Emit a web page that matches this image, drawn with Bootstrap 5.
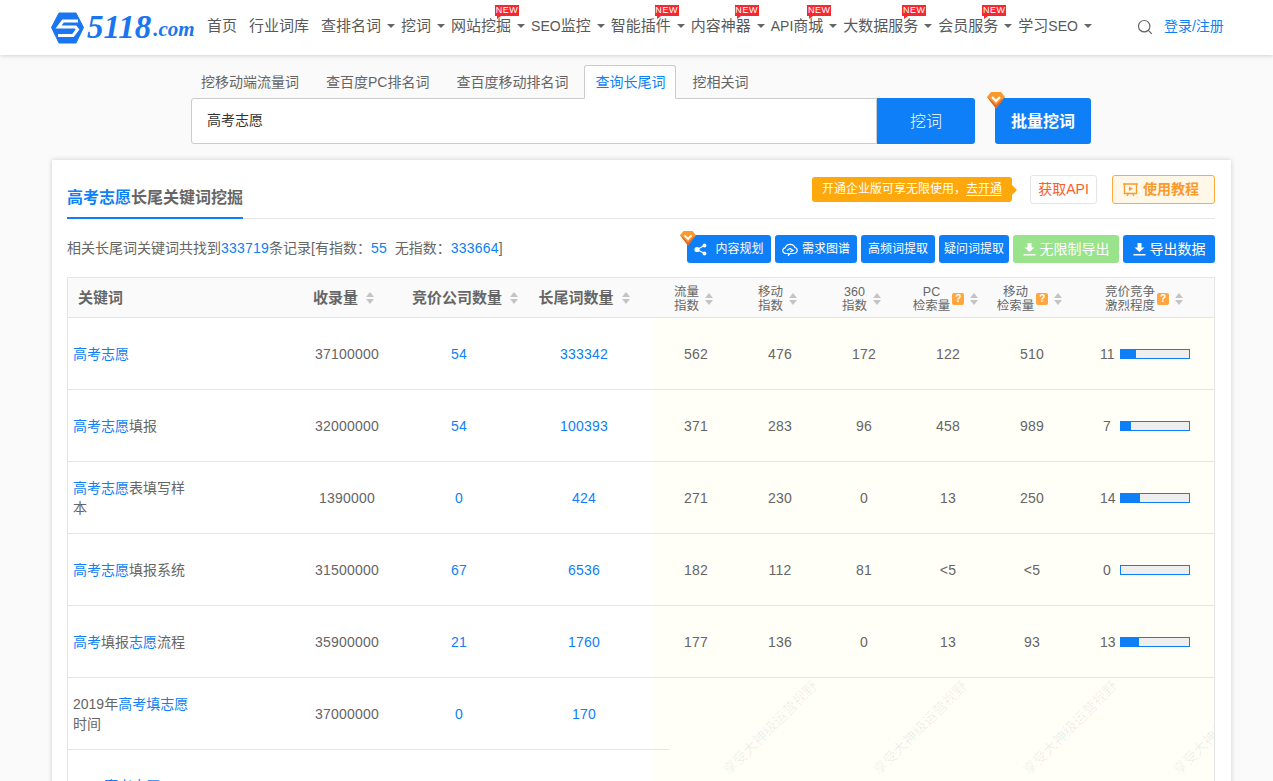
<!DOCTYPE html>
<html lang="zh-CN">
<head>
<meta charset="utf-8">
<title>5118 长尾词挖掘</title>
<link href="https://cdn.jsdelivr.net/npm/bootstrap@5.3.0/dist/css/bootstrap.min.css" rel="stylesheet">
<style>
html,body{height:781px;overflow:hidden}
body{background:#fafafa;color:#666;font-family:"Liberation Sans","Noto Sans CJK SC",sans-serif;font-size:14px}
a{text-decoration:none}
.blue-t{color:#0e7ff7}
.site-head{height:55px;background:#fff;box-shadow:0 1px 4px rgba(0,0,0,.16);padding-left:51px;position:relative;z-index:3}
.logo-wrap{width:156px;flex:none;color:#1976f0;font-family:"Liberation Serif",serif;font-style:italic;font-weight:700;white-space:nowrap;line-height:1}
.logo-num{font-size:33px;margin-left:3px}
.logo-dom{font-size:21px;margin-left:2px;margin-top:3px}
.head-nav{padding-bottom:3px}
.nav-it{position:relative;font-size:15px;color:#595959;white-space:nowrap;line-height:22px}
.lat-s{font-size:14px}
.nav-plain{margin-right:12px}
.nav-drop{padding-right:20px}
.nav-drop::after{content:"";position:absolute;right:6px;top:9px;border:4px solid transparent;border-top:4px solid #666;border-bottom:0}
.new-tag{position:absolute;right:12px;top:-10px;width:24px;height:11px;background:#f5282f;color:#fff;font-size:9px;line-height:11px;text-align:center;letter-spacing:.6px}
.new-tag::after{content:"";position:absolute;left:2px;bottom:-3px;border-left:4px solid #f5282f;border-bottom:3px solid transparent}
.head-search{margin:0 11px 2px 39px}
.login-l{color:#0e7ff7;font-size:14px;padding-bottom:3px}
.search-zone{margin-left:190px;width:901px;padding-top:10px}
.tab-row{border-bottom:0;gap:5px;height:33px;position:relative;z-index:1}
.tab-row .nav-link{height:34px;padding:0 10px;line-height:32px;color:#666;font-size:14px;border:1px solid transparent;border-radius:3px 3px 0 0;margin:0}
.tab-row .nav-link.active{color:#0e7ff7;background:#fff;border-color:#ccc #ccc #fff}
.search-line{padding-left:1px}
.search-box{width:784px;height:46px}
.search-box .form-control{height:46px;border:1px solid #ccc;border-radius:3px 0 0 3px;box-shadow:none;padding:0 15px 5px;font-size:14px;color:#333;font-family:inherit}
.search-go{width:98px;height:46px;background:#0e7ff7;color:#fff;border:0;border-radius:0 3px 3px 0;font-size:16px;font-weight:300;padding:2px 0 0}
.batch-go{position:relative;width:96px;height:46px;margin-left:20px;background:#0e7ff7;color:#fff;border:0;border-radius:3px;font-size:16px;font-weight:700;padding:2px 0 0}
.gem-a{position:absolute;left:-8px;top:-7px;width:18px;height:18px}
.gem-b{position:absolute;left:-7px;top:-5px;width:16px;height:16px}
.main-panel{margin:16px 0 0 52px;width:1179px;background:#fff;box-shadow:0 0 5px rgba(0,0,0,.18);padding:15px 16px 0 15px;height:700px}
.title-row{height:44px;border-bottom:1px solid #e5e5e5}
.title-main{font-size:16px;font-weight:700;height:44px;padding-top:12px;line-height:22px;border-bottom:2px solid #0e7ff7;color:#666}
.tip-box{position:relative;width:200px;height:25px;margin-top:2px;background:#ffa80d;border-radius:3px;color:#fff;font-size:12px;line-height:25px;text-align:center}
.tip-box::after{content:"";position:absolute;right:-5px;top:8px;border-left:5px solid #ffa80d;border-top:5px solid transparent;border-bottom:5px solid transparent}
.tip-box u{text-underline-offset:2px}
.api-btn{width:67px;height:29px;margin-left:18px;background:#fff;border:1px solid #e5e5e5;border-radius:3px;color:#f4602a;font-size:14px;line-height:27px;text-align:center}
.guide-btn{width:103px;height:29px;margin-left:15px;padding-left:10px;background:#fff7e8;border:1px solid #ffa940;border-radius:3px;color:#fa9a2a;font-size:14px;font-weight:700;line-height:27px}
.guide-btn svg{margin-right:5px}
.info-row{height:28px;margin-top:16px;line-height:26px}
.num-t{color:#0e7ff7;letter-spacing:.22px}
.tool-btn{position:relative;height:28px;margin-left:4px;background:#0e7ff7;border-radius:3px;color:#fff;font-size:12px;line-height:28px;white-space:nowrap;display:flex;align-items:center;justify-content:center}
.w-a{width:84px}.w-b{width:82px}.w-c{width:74px}.w-d{width:70px}.w-e{width:106px;background:#98e38b;font-size:14px}.w-f{width:92px;font-size:14px}
.grid-wrap{position:relative;margin-top:14px;height:560px;overflow:hidden;border:1px solid #e5e5e5;border-bottom:0}
.kw-table{table-layout:fixed;width:1146px;margin:0;--bs-table-bg:transparent;--bs-table-color:#666;--bs-table-border-color:#e5e5e5;color:#666}
.kw-table>:not(caption)>*>*{padding:0;vertical-align:middle;text-align:center;box-shadow:none;border-bottom:1px solid #e5e5e5}
.kw-table>thead>tr>th{height:39px;padding-top:2px;background:#fafafa;font-size:15px;font-weight:700;color:#666;white-space:nowrap}
.kw-table>thead>tr>th.small-h{font-size:12.5px;font-weight:400;line-height:14px;padding-top:3px}
.kw-table>thead>tr>th:not(.small-h) .sort-ar{margin-left:8px}
.kw-table>thead>tr>th.small-h:not(:last-child) .hd-in{margin-left:-5px}
.kw-table>tbody>tr>td{height:72px;font-size:14px;padding-top:2px;letter-spacing:.22px}
.kw-table>tbody>tr>td.kw-cell{text-align:left;padding-left:5px;line-height:20px;letter-spacing:0}
.kw-table>tbody>tr>td.tint{background:#fffef7}
.kw-txt{display:block;width:120px}
.c1{width:222px}.c2{width:114px}.c3{width:110px}.c4{width:140px}.c5,.c6,.c7,.c8,.c9{width:84px}.c10{width:140px}
.hd-in{display:inline-flex;align-items:center;justify-content:center}
.hd-left{display:flex;justify-content:flex-start;padding-left:10px}
.shift-r{margin-left:8px}
.shift-l{margin-left:-3px}
.sort-ar{display:inline-flex;flex-direction:column;gap:2px;margin-left:6px}
.sort-ar i{display:block;border-left:4.5px solid transparent;border-right:4.5px solid transparent}
.sort-ar i:first-child{border-bottom:5px solid #c4c4c4}
.sort-ar i:last-child{border-top:5px solid #c4c4c4}
.qm{display:inline-block;width:12px;height:12px;background:#ffa640;border-radius:2px;color:#fff;font-size:10px;font-weight:700;line-height:12px;text-align:center;margin-left:2px}
.bar-cell{display:flex;align-items:center;padding-left:26px}
.bar-num{width:14px;text-align:center;margin-right:6px;letter-spacing:0}
.bar-out{width:70px;height:10px;border:1px solid #0e7ff7;background:#eee}
.bar-in{height:100%;background:#0e7ff7}
.water{position:absolute;left:586px;top:400px;right:0;bottom:0;background:#fffef7;display:flex;padding-top:40px;overflow:hidden}
.water::before{content:"";position:absolute;left:0;top:71px;width:15px;height:1px;background:#e5e5e5}
.water span{flex:none;width:150px;height:20px;text-align:center;line-height:20px;font-size:14px;color:rgba(0,0,0,.07);transform:rotate(-45deg);white-space:nowrap}
.water span:first-child{margin-left:41px}
</style>
</head>
<body>
<header class="site-head d-flex align-items-center">
  <a class="logo-wrap d-flex align-items-center" href="#">
    <svg width="33" height="32" viewBox="0 0 33 32" aria-hidden="true"><path d="M8 1H25L32.500 15.500 25 31H8L.5 15.500Z" fill="#1976f0" stroke="#1976f0" stroke-linejoin="round"/><path d="M27 9H12L7.500 15H24.500L26.500 17.500 22 23.500H7" fill="none" stroke="#fff" stroke-width="3"/></svg>
    <span class="logo-num">5118</span><span class="logo-dom">.com</span>
  </a>
  <nav class="head-nav d-flex align-items-center">
    <a class="nav-it nav-plain" href="#">首页</a>
    <a class="nav-it nav-plain" href="#">行业词库</a>
    <a class="nav-it nav-drop" href="#">查排名词</a>
    <a class="nav-it nav-drop" href="#">挖词</a>
    <a class="nav-it nav-drop" href="#">网站挖掘<span class="new-tag">NEW</span></a>
    <a class="nav-it nav-drop" href="#"><span class="lat-s">SEO</span>监控</a>
    <a class="nav-it nav-drop" href="#">智能插件<span class="new-tag">NEW</span></a>
    <a class="nav-it nav-drop" href="#">内容神器<span class="new-tag">NEW</span></a>
    <a class="nav-it nav-drop" href="#"><span class="lat-s">API</span>商城<span class="new-tag">NEW</span></a>
    <a class="nav-it nav-drop" href="#">大数据服务<span class="new-tag">NEW</span></a>
    <a class="nav-it nav-drop" href="#">会员服务<span class="new-tag">NEW</span></a>
    <a class="nav-it nav-drop" href="#">学习<span class="lat-s">SEO</span></a>
  </nav>
  <svg class="head-search" width="16" height="16" viewBox="0 0 16 16" aria-hidden="true"><circle cx="7.200" cy="7.200" r="5.700" fill="none" stroke="#666" stroke-width="1.200"/><path d="M11.300 11.300 14.800 14.800" stroke="#666" stroke-width="1.200"/></svg>
  <a class="login-l" href="#">登录/注册</a>
</header>

<section class="search-zone">
  <div class="nav nav-tabs tab-row">
    <a class="nav-link" href="#">挖移动端流量词</a>
    <a class="nav-link" href="#">查百度PC排名词</a>
    <a class="nav-link" href="#">查百度移动排名词</a>
    <a class="nav-link active" href="#">查询长尾词</a>
    <a class="nav-link" href="#">挖相关词</a>
  </div>
  <div class="search-line d-flex">
    <div class="search-box d-flex">
      <input class="form-control" type="text" value="高考志愿">
      <button class="search-go flex-shrink-0" type="button">挖词</button>
    </div>
    <button class="batch-go" type="button">
      <svg class="gem-a" viewBox="0 0 18 18" aria-hidden="true"><path d="M4 1H14L18 6 9 17.500 0 6Z" fill="#f99a2e"/><path d="M0 6 9 17.500 18 6 14 9 9 14 4 9Z" fill="#e2642a"/><path d="M5 6 9 10 13 6" fill="none" stroke="#fff" stroke-width="2"/></svg>
      批量挖词
    </button>
  </div>
</section>

<main class="main-panel">
  <div class="title-row d-flex justify-content-between">
    <div class="title-main"><span class="blue-t">高考志愿</span>长尾关键词挖掘</div>
    <div class="d-flex align-items-start">
      <div class="tip-box">开通企业版可享无限使用，<u>去开通</u></div>
      <a class="api-btn" href="#">获取API</a>
      <a class="guide-btn d-flex align-items-center" href="#">
        <svg width="15" height="15" viewBox="0 0 15 15" aria-hidden="true"><path d="M1.500 2H13.500V11.500H1.500ZM0 2H15M4 14 5.500 11.500M11 14 9.500 11.500" fill="none" stroke="#fa9a2a" stroke-width="1.300"/><path d="M6 4.500 10 6.800 6 9Z" fill="#fa9a2a"/></svg>
        使用教程
      </a>
    </div>
  </div>
  <div class="info-row d-flex justify-content-between">
    <div>相关长尾词关键词共找到<span class="num-t">333719</span>条记录[有指数：<span class="num-t">55</span>&nbsp; 无指数：<span class="num-t">333664</span>]</div>
    <div class="d-flex">
      <a class="tool-btn w-a" href="#">
        <svg class="gem-b" viewBox="0 0 18 18" aria-hidden="true"><path d="M4 1H14L18 6 9 17.500 0 6Z" fill="#f99a2e"/><path d="M0 6 9 17.500 18 6 14 9 9 14 4 9Z" fill="#e2642a"/><path d="M5 6 9 10 13 6" fill="none" stroke="#fff" stroke-width="2"/></svg>
        <svg class="me-2" width="13" height="13" viewBox="0 0 13 13" aria-hidden="true"><path d="M3 6.500 10.500 2.500M3 6.500 10.500 10.500" stroke="#fff" stroke-width="1.200"/><circle cx="3" cy="6.500" r="2.600" fill="#fff"/><circle cx="10.500" cy="2.500" r="1.900" fill="#fff"/><circle cx="10.500" cy="10.500" r="1.900" fill="#fff"/></svg>内容规划
      </a>
      <a class="tool-btn w-b" href="#">
        <svg class="me-1" width="16" height="13" viewBox="0 0 16 13" aria-hidden="true"><path d="M4 10.500C1.500 10.500.7 8.800.8 7.300 1 5.500 2.300 4.800 3.200 4.800 3.800 2.600 5.500 1.300 8 1.300 10.500 1.300 12.300 2.500 12.900 4.500 14.500 4.900 15.300 6 15.200 7.300 15 9.300 13.500 10.500 11.500 10.500H8L6.500 12.300V10.500ZM5 7.500 8 5.500 11 7.500 8 9" fill="none" stroke="#fff" stroke-width="1.200"/></svg>需求图谱
      </a>
      <a class="tool-btn w-c" href="#">高频词提取</a>
      <a class="tool-btn w-d" href="#">疑问词提取</a>
      <a class="tool-btn w-e" href="#">
        <svg class="me-1" width="13" height="14" viewBox="0 0 13 14" aria-hidden="true"><path d="M4.500 1H8.500V5.500H11.500L6.500 10 1.500 5.500H4.500ZM.5 12H12.500V13.500H.5Z" fill="#fff"/></svg>无限制导出
      </a>
      <a class="tool-btn w-f" href="#">
        <svg class="me-1" width="13" height="14" viewBox="0 0 13 14" aria-hidden="true"><path d="M4.500 1H8.500V5.500H11.500L6.500 10 1.500 5.500H4.500ZM.5 12H12.500V13.500H.5Z" fill="#fff"/></svg>导出数据
      </a>
    </div>
  </div>

  <div class="grid-wrap">
    <table class="table kw-table">
      <colgroup><col class="c1"><col class="c2"><col class="c3"><col class="c4"><col class="c5"><col class="c6"><col class="c7"><col class="c8"><col class="c9"><col class="c10"></colgroup>
      <thead>
        <tr>
          <th><span class="hd-left">关键词</span></th>
          <th><span class="hd-in shift-l me-1">收录量<span class="sort-ar"><i></i><i></i></span></span></th>
          <th><span class="hd-in shift-r me-1">竞价公司数量<span class="sort-ar"><i></i><i></i></span></span></th>
          <th><span class="hd-in">长尾词数量<span class="sort-ar"><i></i><i></i></span></span></th>
          <th class="small-h"><span class="hd-in"><span>流量<br>指数</span><span class="sort-ar"><i></i><i></i></span></span></th>
          <th class="small-h"><span class="hd-in"><span>移动<br>指数</span><span class="sort-ar"><i></i><i></i></span></span></th>
          <th class="small-h"><span class="hd-in"><span>360<br>指数</span><span class="sort-ar"><i></i><i></i></span></span></th>
          <th class="small-h"><span class="hd-in"><span>PC<br>检索量</span><span class="qm">?</span><span class="sort-ar"><i></i><i></i></span></span></th>
          <th class="small-h"><span class="hd-in"><span>移动<br>检索量</span><span class="qm">?</span><span class="sort-ar"><i></i><i></i></span></span></th>
          <th class="small-h"><span class="hd-in"><span>竞价竞争<br>激烈程度</span><span class="qm">?</span><span class="sort-ar"><i></i><i></i></span></span></th>
        </tr>
      </thead>
      <tbody>
        <tr>
          <td class="kw-cell"><span class="kw-txt"><a class="blue-t" href="#">高考志愿</a></span></td><td>37100000</td><td class="blue-t">54</td><td class="blue-t">333342</td>
          <td class="tint">562</td><td class="tint">476</td><td class="tint">172</td><td class="tint">122</td><td class="tint">510</td>
          <td class="tint"><div class="bar-cell"><span class="bar-num">11</span><div class="bar-out"><div class="bar-in" style="width:22%"></div></div></div></td>
        </tr>
        <tr>
          <td class="kw-cell"><span class="kw-txt"><a class="blue-t" href="#">高考志愿</a>填报</span></td><td>32000000</td><td class="blue-t">54</td><td class="blue-t">100393</td>
          <td class="tint">371</td><td class="tint">283</td><td class="tint">96</td><td class="tint">458</td><td class="tint">989</td>
          <td class="tint"><div class="bar-cell"><span class="bar-num">7</span><div class="bar-out"><div class="bar-in" style="width:14%"></div></div></div></td>
        </tr>
        <tr>
          <td class="kw-cell"><span class="kw-txt"><a class="blue-t" href="#">高考志愿</a>表填写样本</span></td><td>1390000</td><td class="blue-t">0</td><td class="blue-t">424</td>
          <td class="tint">271</td><td class="tint">230</td><td class="tint">0</td><td class="tint">13</td><td class="tint">250</td>
          <td class="tint"><div class="bar-cell"><span class="bar-num">14</span><div class="bar-out"><div class="bar-in" style="width:28%"></div></div></div></td>
        </tr>
        <tr>
          <td class="kw-cell"><span class="kw-txt"><a class="blue-t" href="#">高考志愿</a>填报系统</span></td><td>31500000</td><td class="blue-t">67</td><td class="blue-t">6536</td>
          <td class="tint">182</td><td class="tint">112</td><td class="tint">81</td><td class="tint">&lt;5</td><td class="tint">&lt;5</td>
          <td class="tint"><div class="bar-cell"><span class="bar-num">0</span><div class="bar-out"><div class="bar-in" style="width:0%"></div></div></div></td>
        </tr>
        <tr>
          <td class="kw-cell"><span class="kw-txt"><a class="blue-t" href="#">高考</a>填报<a class="blue-t" href="#">志愿</a>流程</span></td><td>35900000</td><td class="blue-t">21</td><td class="blue-t">1760</td>
          <td class="tint">177</td><td class="tint">136</td><td class="tint">0</td><td class="tint">13</td><td class="tint">93</td>
          <td class="tint"><div class="bar-cell"><span class="bar-num">13</span><div class="bar-out"><div class="bar-in" style="width:26%"></div></div></div></td>
        </tr>
        <tr>
          <td class="kw-cell"><span class="kw-txt">2019年<a class="blue-t" href="#">高考填志愿</a>时间</span></td><td>37000000</td><td class="blue-t">0</td><td class="blue-t">170</td>
          <td colspan="6"></td>
        </tr>
        <tr>
          <td class="kw-cell"><span class="kw-txt">2019<a class="blue-t" href="#">高考志愿</a> 985</span></td><td></td><td></td><td></td>
          <td colspan="6"></td>
        </tr>
      </tbody>
    </table>
    <div class="water"><span>享受大神级运营视野</span><span>享受大神级运营视野</span><span>享受大神级运营视野</span><span>享受大神级运营视野</span></div>
  </div>
</main>
<script src="https://cdn.jsdelivr.net/npm/bootstrap@5.3.0/dist/js/bootstrap.bundle.min.js"></script>
</body>
</html>
